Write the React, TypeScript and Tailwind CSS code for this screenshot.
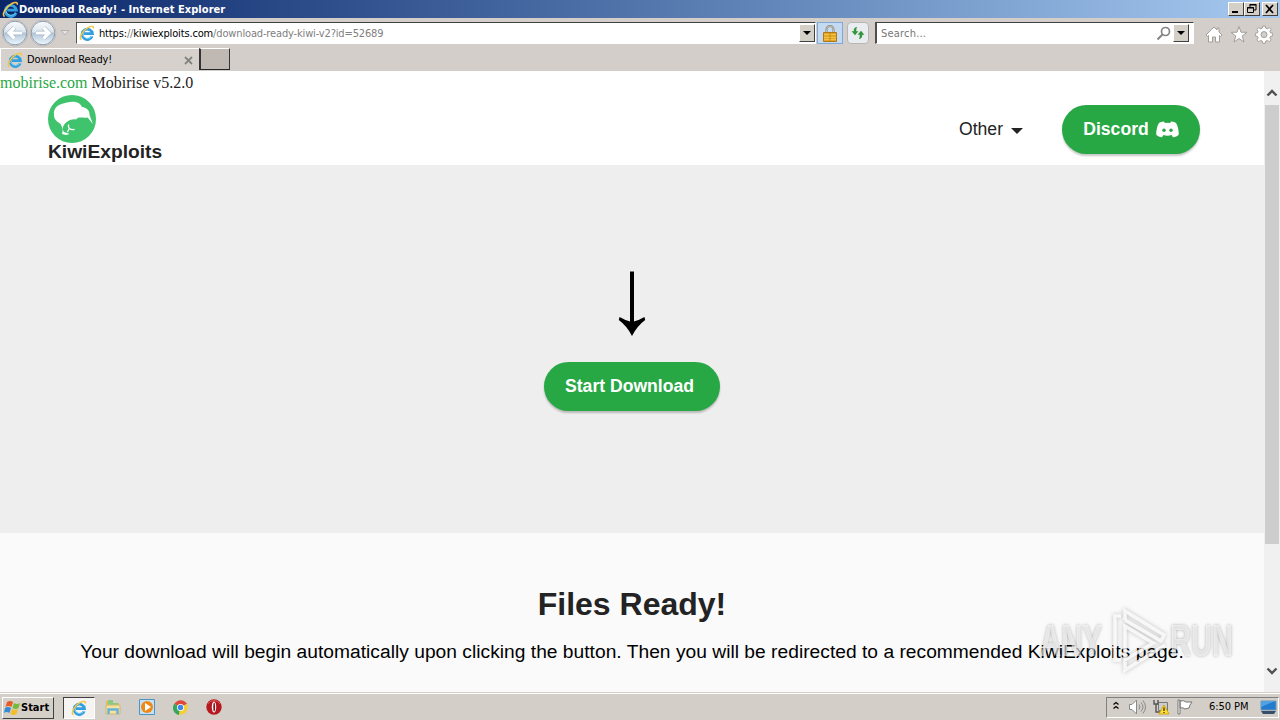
import type { ReactNode } from "react"

const uiFont = "font-['DejaVu_Sans_Condensed','DejaVu_Sans',sans-serif]"
const bevel = "border border-t-white border-l-white border-r-[#404040] border-b-[#404040] bg-[#d4d0c8]"

function IeLogo({ size = 16 }: { size?: number }) {
  return (
    <svg width={size} height={size} viewBox="0 0 16 16" fill="none" className="shrink-0">
      <path d="M13.200 11.200A5.200 5.200 0 1 1 13.500 8.600H5" stroke="#349fde" strokeWidth="2.700" />
      <path d="M13 11A5.200 5.200 0 0 1 3.700 10" stroke="#79d2f5" strokeWidth=".9" />
      <path d="M2.500 14.600C-.8 13.500 3.500 5.600 9 2.600c3.200-1.800 6-1.700 5.300.9" stroke="#f1c744" strokeWidth="1.500" />
    </svg>
  )
}

function RoundArrow({ flip = false }: { flip?: boolean }) {
  return (
    <svg width="28" height="28" viewBox="0 0 28 28" className={flip ? "-scale-x-100" : ""}>
      <defs>
        <linearGradient id="navFill" x1="0" y1="0" x2="0" y2="1">
          <stop stopColor="#f8fbfd" />
          <stop offset=".46" stopColor="#dce5ed" />
          <stop offset=".5" stopColor="#b0c3d6" />
          <stop offset="1" stopColor="#edf9ff" />
        </linearGradient>
      </defs>
      <circle cx="14" cy="14" r="13" fill="#eceae8" stroke="#bbb8b5" />
      <circle cx="14" cy="14" r="11.800" fill="url(#navFill)" stroke="#8c9bab" />
      <path d="M21 14H8m5.500-5.500L8 14l5.500 5.500" fill="none" stroke="#a3b4c6" strokeWidth="4.400" />
      <path d="M21 14H8m5.500-5.500L8 14l5.500 5.500" fill="none" stroke="#fff" strokeWidth="3.200" />
    </svg>
  )
}

function WindowButton({ children, className = "" }: { children: ReactNode; className?: string }) {
  return (
    <div className={`h-[14px] w-4 ${bevel} ${className}`}>
      <svg width="14" height="12" viewBox="0 0 14 12" fill="none" stroke="#000">
        {children}
      </svg>
    </div>
  )
}

function DropButton() {
  return (
    <div className={`flex h-[18px] w-4 shrink-0 items-center justify-center ${bevel}`}>
      <svg width="8" height="4" viewBox="0 0 8 4">
        <path d="M0 0h8L4 4z" />
      </svg>
    </div>
  )
}

function TitleBar() {
  return (
    <div className="flex h-[18px] items-center bg-linear-to-r from-[#0b2569] to-[#a6caf0] pl-0.5 pr-0.5">
      <IeLogo size={17} />
      <span className="flex-1 whitespace-nowrap pt-[1px] text-[11px] font-bold leading-[17px] tracking-[0.05px] text-white">
        Download Ready! - Internet Explorer
      </span>
      <WindowButton>
        <path d="M3 9h6" strokeWidth="2" />
      </WindowButton>
      <WindowButton>
        <path d="M5 4V1.500h6V7H9M4.500 2h7M2.500 4.500h6v5h-6zM2 5h7" />
      </WindowButton>
      <WindowButton className="ml-[2px]">
        <path d="m3 2 7 8m0-8-7 8" strokeWidth="1.700" />
      </WindowButton>
    </div>
  )
}

function AddressRow() {
  return (
    <div className="flex h-[30px] items-center">
      <div className="flex w-[76px] items-center pl-[1px]">
        <RoundArrow />
        <RoundArrow flip />
        <svg width="10" height="6" viewBox="0 0 10 6" className="ml-[3px]">
          <path d="M1 .5h8L5 5z" fill="#e4e2df" stroke="#b5b1ad" />
        </svg>
      </div>
      <div className="flex h-[22px] w-[740px] items-center border border-b-white border-l-[#555] border-r-white border-t-[#404040] bg-white pl-0.5 text-[11px]">
        <IeLogo />
        <span className="ml-1 flex-1 whitespace-nowrap pt-[2px] tracking-[-0.15px] text-[#808080]">
          <span className="text-black">https:</span>//<span className="text-black">kiwiexploits.com</span>
          /download-ready-kiwi-v2?id=52689
        </span>
        <DropButton />
      </div>
      <div className="ml-[1px] flex h-[22px] w-[26px] items-center justify-center border border-[#7daadd] bg-[#c4daf3]">
        <svg width="14" height="17" viewBox="0 0 14 17">
          <path d="M3.500 8V4.500a3.500 3.500 0 0 1 7 0V8" fill="none" stroke="#888274" strokeWidth="2" />
          <path d="M3.500 8V4.500a3.500 3.500 0 0 1 7 0V8" fill="none" stroke="#ddd8c4" strokeWidth=".7" />
          <path d="M.5 7.500h13v9H.5z" fill="#e3a726" stroke="#b1781a" />
          <path d="M1 9.500h12M1 12.500h12M1 14.500h12" stroke="#f3c143" />
          <path d="M7 8v8" stroke="#c4871b" />
        </svg>
      </div>
      <div className="ml-[4px] flex h-[22px] w-[22px] items-center justify-center rounded-sm border border-[#b8b6b3] bg-[#e9edef]">
        <svg width="14" height="12" viewBox="0 0 16 14" fill="#31963b">
          <path d="M7 0C4.500 0 3 1.500 3 5H.5L4.500 9.500 8.500 5H6c0-2 0-3.500 1-5z" />
          <path d="M9 14c2.500 0 4-1.500 4-5h2.500l-4-4.500L7.500 9H10c0 2 0 3.500-1 5z" />
        </svg>
      </div>
      <div className="ml-[6px] flex h-[22px] w-[319px] items-center border border-l-2 border-b-white border-l-[#505050] border-r-white border-t-[#404040] bg-white pl-[4px] pr-1 text-[11px] text-[#777]">
        <span className="flex-1 pt-[2px] tracking-[0.2px]">Search...</span>
        <svg width="14" height="14" viewBox="0 0 14 14" className="mr-0.5" fill="none" stroke="#858585">
          <circle cx="8.500" cy="5.500" r="4" strokeWidth="1.700" />
          <path d="m5.500 8.500-5 5" strokeWidth="2" />
        </svg>
        <DropButton />
      </div>
      <svg width="68" height="20" viewBox="0 0 68 20" className="ml-[11px] mt-[4px]" fill="#fff" stroke="#a19d99">
        <path d="M1 10 9 2l3 3V3h2v4l3 3-1.500 1.500-1-1V17h-4v-5h-3v5h-4v-6.500l-1 1z" />
        <path d="m34 1.500 2 5.700 6 .1-4.800 3.700 1.800 6-5-3.500-5 3.500 1.800-6L26 7.300l6-.1z" />
        <g transform="translate(59 9)">
          <path d="M-1.300-8h2.600l.5 2.200 1.500.6 2-1.200 1.800 1.800-1.200 2 .6 1.400 2.200.5v2.600l-2.200.5-.6 1.500 1.200 2-1.800 1.800-2-1.200-1.500.6-.5 2.200h-2.600l-.5-2.200-1.500-.6-2 1.200-1.800-1.800 1.200-2-.6-1.500-2.200-.5v-2.600l2.200-.5.6-1.400-1.200-2 1.800-1.800 2 1.200 1.500-.6z" />
          <circle r="3" cy=".6" fill="#d4ceca" />
        </g>
      </svg>
    </div>
  )
}

function TabRow() {
  return (
    <div className="flex h-[23px] text-[11px]">
      <div className="flex w-[199px] items-center border-l border-t border-white bg-[#d6d1cc] pl-[6px] pr-[6px]">
        <IeLogo />
        <span className="ml-[4px] flex-1 whitespace-nowrap pt-[1px] tracking-[-0.120px]">Download Ready!</span>
        <svg width="9" height="9" viewBox="0 0 9 9" stroke="#858280" strokeWidth="1.800">
          <path d="m1 1 7 7m0-7L1 8" />
        </svg>
      </div>
      <div className="mb-[1px] w-[31px] border border-l-2 border-b-[#252525] border-l-[#343434] border-r-[#343434] border-t-white bg-[#bfb8b3]" />
    </div>
  )
}

function KiwiLogo() {
  return (
    <svg width="48" height="48" viewBox="0 0 48 48">
      <circle cx="24" cy="24" r="24" fill="#3fc36c" />
      <path
        d="M6 20C5 12 11 9 19 7.500C26 5.500 32 7 34 12C39 12.500 42 16 41.500 20L45 29L39.500 22.500C35 23.500 31 21 28 24.500C23 23.500 17 27 15 32C14 35 16 38 18 37.500L21.500 39L18 40L14 39C15.500 35 14 31 12 28.500C8 26 6 24 6 20z"
        fill="#fff"
      />
      <path d="M20.500 29.500C20 33 21.500 35 26.500 34.500M21.500 33L19.500 37" fill="none" stroke="#fff" strokeWidth="1.300" />
    </svg>
  )
}

function SiteHeader() {
  return (
    <header className="flex h-[70px] justify-between pl-12 pr-16">
      <div className="flex flex-col">
        <KiwiLogo />
        <span className="text-[19.2px] font-bold leading-[17px] text-[#232323]">KiwiExploits</span>
      </div>
      <div className="flex h-[68px] items-center">
        <span className="text-[17.6px] leading-6 text-[#232323]">Other</span>
        <svg width="12" height="6" viewBox="0 0 12 6" className="ml-2 mt-[3px]" fill="#232323">
          <path d="M0 0h12L6 6z" />
        </svg>
        <button className="ml-[39px] flex h-[49px] w-[138px] items-center rounded-full bg-[#28a745] pl-[21px] text-[17.6px] font-bold text-white shadow-[0_2px_2px_rgba(0,0,0,.22)]">
          <span className="w-[66px]">Discord</span>
          <svg width="23" height="17" viewBox="0 0 23 17" className="ml-[7px]">
            <path
              d="M8 .5C5 .7 3 2 3 2 1 5 .2 9.500.2 13.500c1.500 1.800 3.500 2.700 5.800 2.700l1.400-2.100c2.700.7 5.500.7 8.200 0L17 16.200c2.300 0 4.300-.9 5.800-2.700 0-4-.8-8.500-2.800-11.500 0 0-2-1.300-5-1.500l-.8 1.400q-2.700-.5-5.400 0z"
              fill="#fff"
            />
            <g fill="#28a745">
              <ellipse cx="8" cy="9.200" rx="1.700" ry="1.800" />
              <ellipse cx="15" cy="9.200" rx="1.700" ry="1.800" />
            </g>
          </svg>
        </button>
      </div>
    </header>
  )
}

// translucent, sits over the end of the paragraph
function Watermark() {
  return (
    <div className="absolute left-[1040px] top-[535px] flex h-[70px] w-[194px] items-center justify-between font-['Liberation_Sans',sans-serif] text-[44px] font-bold text-white/60 [text-shadow:0_0_4px_rgba(0,0,0,.3)]">
      <span className="w-[64px] origin-left scale-x-[.67]">ANY</span>
      <svg width="60" height="66" viewBox="0 0 60 66" fill="none" className="drop-shadow-[0_0_2px_rgba(0,0,0,.3)]" stroke="#fff" strokeOpacity=".8" strokeWidth="3.500">
        <path d="M14 8H8v44h6M18 12V3l39 24-3 6-36-21M18 54v8l40-25" />
        <path d="M18 18v34l28-17z" />
      </svg>
      <span className="w-[64px] origin-left scale-x-[.66]">RUN</span>
    </div>
  )
}

function Page() {
  return (
    <main className="relative min-w-0 flex-1 overflow-hidden bg-white font-['Liberation_Sans',sans-serif]">
      <p className="h-6 font-['Liberation_Serif',serif] text-[16px] leading-6 text-[#232323]">
        <a className="text-[#28a745]">mobirise.com</a> Mobirise v5.2.0
      </p>
      <SiteHeader />
      <section className="flex h-[368px] flex-col items-center bg-[#eee] pt-[106px]">
        <svg width="28" height="66" viewBox="0 0 28 66">
          <path d="M12 .5h4v50Q20 49.500 26.500 46l.7 3Q19 55 14 65 9 55 .8 49l.7-3Q8 49.500 12 50.500z" />
        </svg>
        <button className="mt-[25px] h-[49px] w-44 rounded-full bg-[#28a745] pl-[21px] text-left text-[17.6px] font-bold text-white shadow-[0_2px_2px_rgba(0,0,0,.22)]">
          Start Download
        </button>
      </section>
      <section className="h-[160px] bg-[#fafafa] pt-[48px] text-center">
        <h1 className="text-[32px] font-bold leading-[46px] text-[#232323]">Files Ready!</h1>
        <p className="mt-[11px] whitespace-nowrap text-[19.2px] leading-7 tracking-[0.023px] text-black">
          Your download will begin automatically upon clicking the button. Then you will be redirected to a recommended KiwiExploits page.
        </p>
      </section>
      <Watermark />
    </main>
  )
}

function ScrollArrow({ down = false }: { down?: boolean }) {
  return (
    <svg width="12" height="8" viewBox="0 0 12 8" className={down ? "rotate-180" : ""}>
      <path d="m1.500 6.500 4.500-4.500 4.500 4.500" fill="none" stroke="#505050" strokeWidth="2.400" />
    </svg>
  )
}

function ScrollBar() {
  return (
    <div className="flex w-4 shrink-0 flex-col items-center bg-[#f0f0f0] pb-[17px] pt-[18px]">
      <ScrollArrow />
      <div className="mt-2 h-[439px] w-[14px] bg-[#cdcdcd]" />
      <div className="flex-1" />
      <ScrollArrow down />
    </div>
  )
}

function QuickIcons() {
  return (
    <>
      <svg width="16" height="16" viewBox="0 0 16 16" className="ml-[10px]">
        <path d="M1 2h5l1 2h7v10H1z" fill="#e2bd55" />
        <path d="M3 1h5v3h5v4H3z" fill="#8bc982" />
        <path d="M1 6h14v9H1z" fill="#f6e3a0" stroke="#ceb86e" />
        <path d="M3.500 15v-4.500h9V15" fill="none" stroke="#66b2d7" strokeWidth="2.500" />
      </svg>
      <svg width="16" height="16" viewBox="0 0 16 16" className="ml-[18px]">
        <path d="M.5.500h15v15H.5z" fill="#c5e2f5" stroke="#4b94ca" />
        <circle cx="8" cy="8" r="6" fill="#ef8817" />
        <path d="m6 4 6 4-6 4z" fill="#fff" />
      </svg>
      <svg width="15" height="15" viewBox="0 0 16 16" className="ml-[18px]">
        <path d="M8 8 1.400 4A8 8 0 0 1 15 4z" fill="#df493b" />
        <path d="M8 8 1.400 4a7.700 7.700 0 0 0 5 12z" fill="#35a75a" />
        <path d="M8 8l7-4c2.500 6-1 12-8.600 12z" fill="#f4cf37" />
        <circle cx="8" cy="8" r="3.800" fill="#fff" />
        <circle cx="8" cy="8" r="2.900" fill="#4088e5" />
      </svg>
      <svg width="16" height="16" viewBox="0 0 16 16" className="ml-[18px]">
        <circle cx="8" cy="8" r="7.700" fill="#b61820" />
        <path d="M2 5a7 7 0 0 1 12 0" stroke="#e15b59" fill="none" />
        <ellipse cx="8" cy="8" rx="2.200" ry="5.500" fill="#fff" />
        <ellipse cx="8.200" cy="8" rx=".9" ry="4.500" fill="#8f1015" />
      </svg>
    </>
  )
}

function Tray() {
  return (
    <div className="ml-auto mr-[1px] flex h-[21px] w-[173px] items-center border border-b-white border-l-[#808080] border-r-white border-t-[#808080] pl-[6px] text-[11px]">
      <svg width="6" height="9" viewBox="0 0 6 9" className="-mt-1" fill="none" stroke="#000" strokeWidth="1.300">
        <path d="m.5 3.500 2.500-2 2.500 2m-5 4 2.500-2 2.500 2" />
      </svg>
      <svg width="17" height="16" viewBox="0 0 17 16" className="ml-[10px]" fill="none" stroke="#888">
        <path d="M.5 5.500H3L7.500 1v14L3 10.500H.5z" fill="#fff" />
        <path d="M10 5.500q2 2.500 0 5M12 3.500q4 4.500 0 9M14 1.500q5 6.500 0 13" />
      </svg>
      <svg width="17" height="16" viewBox="0 0 17 16" className="ml-[7px]">
        <path d="M5.500 3.500h9v8h-9z" fill="#ccc" stroke="#777" />
        <path d="M1 1v4h4V1M3 5v8h4" fill="none" stroke="#555" strokeWidth="1.400" />
        <path d="m11 6 5 9H6z" fill="#ffe136" stroke="#d7a50b" />
        <path d="M11 8.500V12m0 1v1" stroke="#222" strokeWidth="1.200" />
      </svg>
      <svg width="17" height="16" viewBox="0 0 17 16" className="ml-[7px]" fill="#fff" stroke="#777">
        <path d="M1 1h2v14H1zM3 2q4-1 6 1h6l-2 3 -1 3-4 1q-2-2-5-1z" />
      </svg>
      <span className="ml-[15px] whitespace-nowrap pt-[1px] tracking-[-0.050px]">6:50 PM</span>
      <svg width="17" height="15" viewBox="0 0 17 15" className="ml-auto mr-[1px]">
        <path d="M1 1h15v9H1z" fill="#237bd0" stroke="#7295b3" />
        <path d="m1 1 14 0L1 7z" fill="#51a2e2" />
        <path d="M1 11h15l-2 3H3z" fill="#354f6b" />
      </svg>
    </div>
  )
}

function TaskBar() {
  return (
    <div className="flex h-7 items-center border-t border-[#d4d0c8] bg-[#d4cec8] shadow-[inset_0_1px_#fff]">
      <div className={`ml-0.5 mt-0.5 flex h-[22px] w-[52px] items-center pl-[1px] ${bevel}`}>
        <svg width="17" height="16" viewBox="0 0 17 16" className="shrink-0">
          <path d="M3 2q3-2 6 0L7.500 7q-3-2-6 0z" fill="#e75c25" />
          <path d="M10 3q3 2 6 0l-1.500 5q-3 2-6 0z" fill="#78b93b" />
          <path d="M1 8q3-2 6 0l-1.500 5q-3-2-5.500 0z" fill="#368ad4" />
          <path d="M8 9q3 2 6 0l-1.500 5q-3 2-6 0z" fill="#f4bd27" />
        </svg>
        <span className="pt-[1px] text-[11px] font-bold">Start</span>
      </div>
      <div className="ml-[9px] mt-0.5 flex h-[22px] w-8 items-center justify-center border border-b-white border-l-[#404040] border-r-white border-t-[#404040] bg-[#f5f4f2]">
        <IeLogo />
      </div>
      <div className="mt-[1px] flex flex-1 items-center">
        <QuickIcons />
        <Tray />
      </div>
    </div>
  )
}

export default function App() {
  return (
    <div className={`flex h-[720px] w-[1280px] flex-col overflow-hidden bg-[#d4ceca] text-black ${uiFont}`}>
      <TitleBar />
      <AddressRow />
      <TabRow />
      <div className="flex h-[621px]">
        <Page />
        <ScrollBar />
      </div>
      <TaskBar />
    </div>
  )
}
